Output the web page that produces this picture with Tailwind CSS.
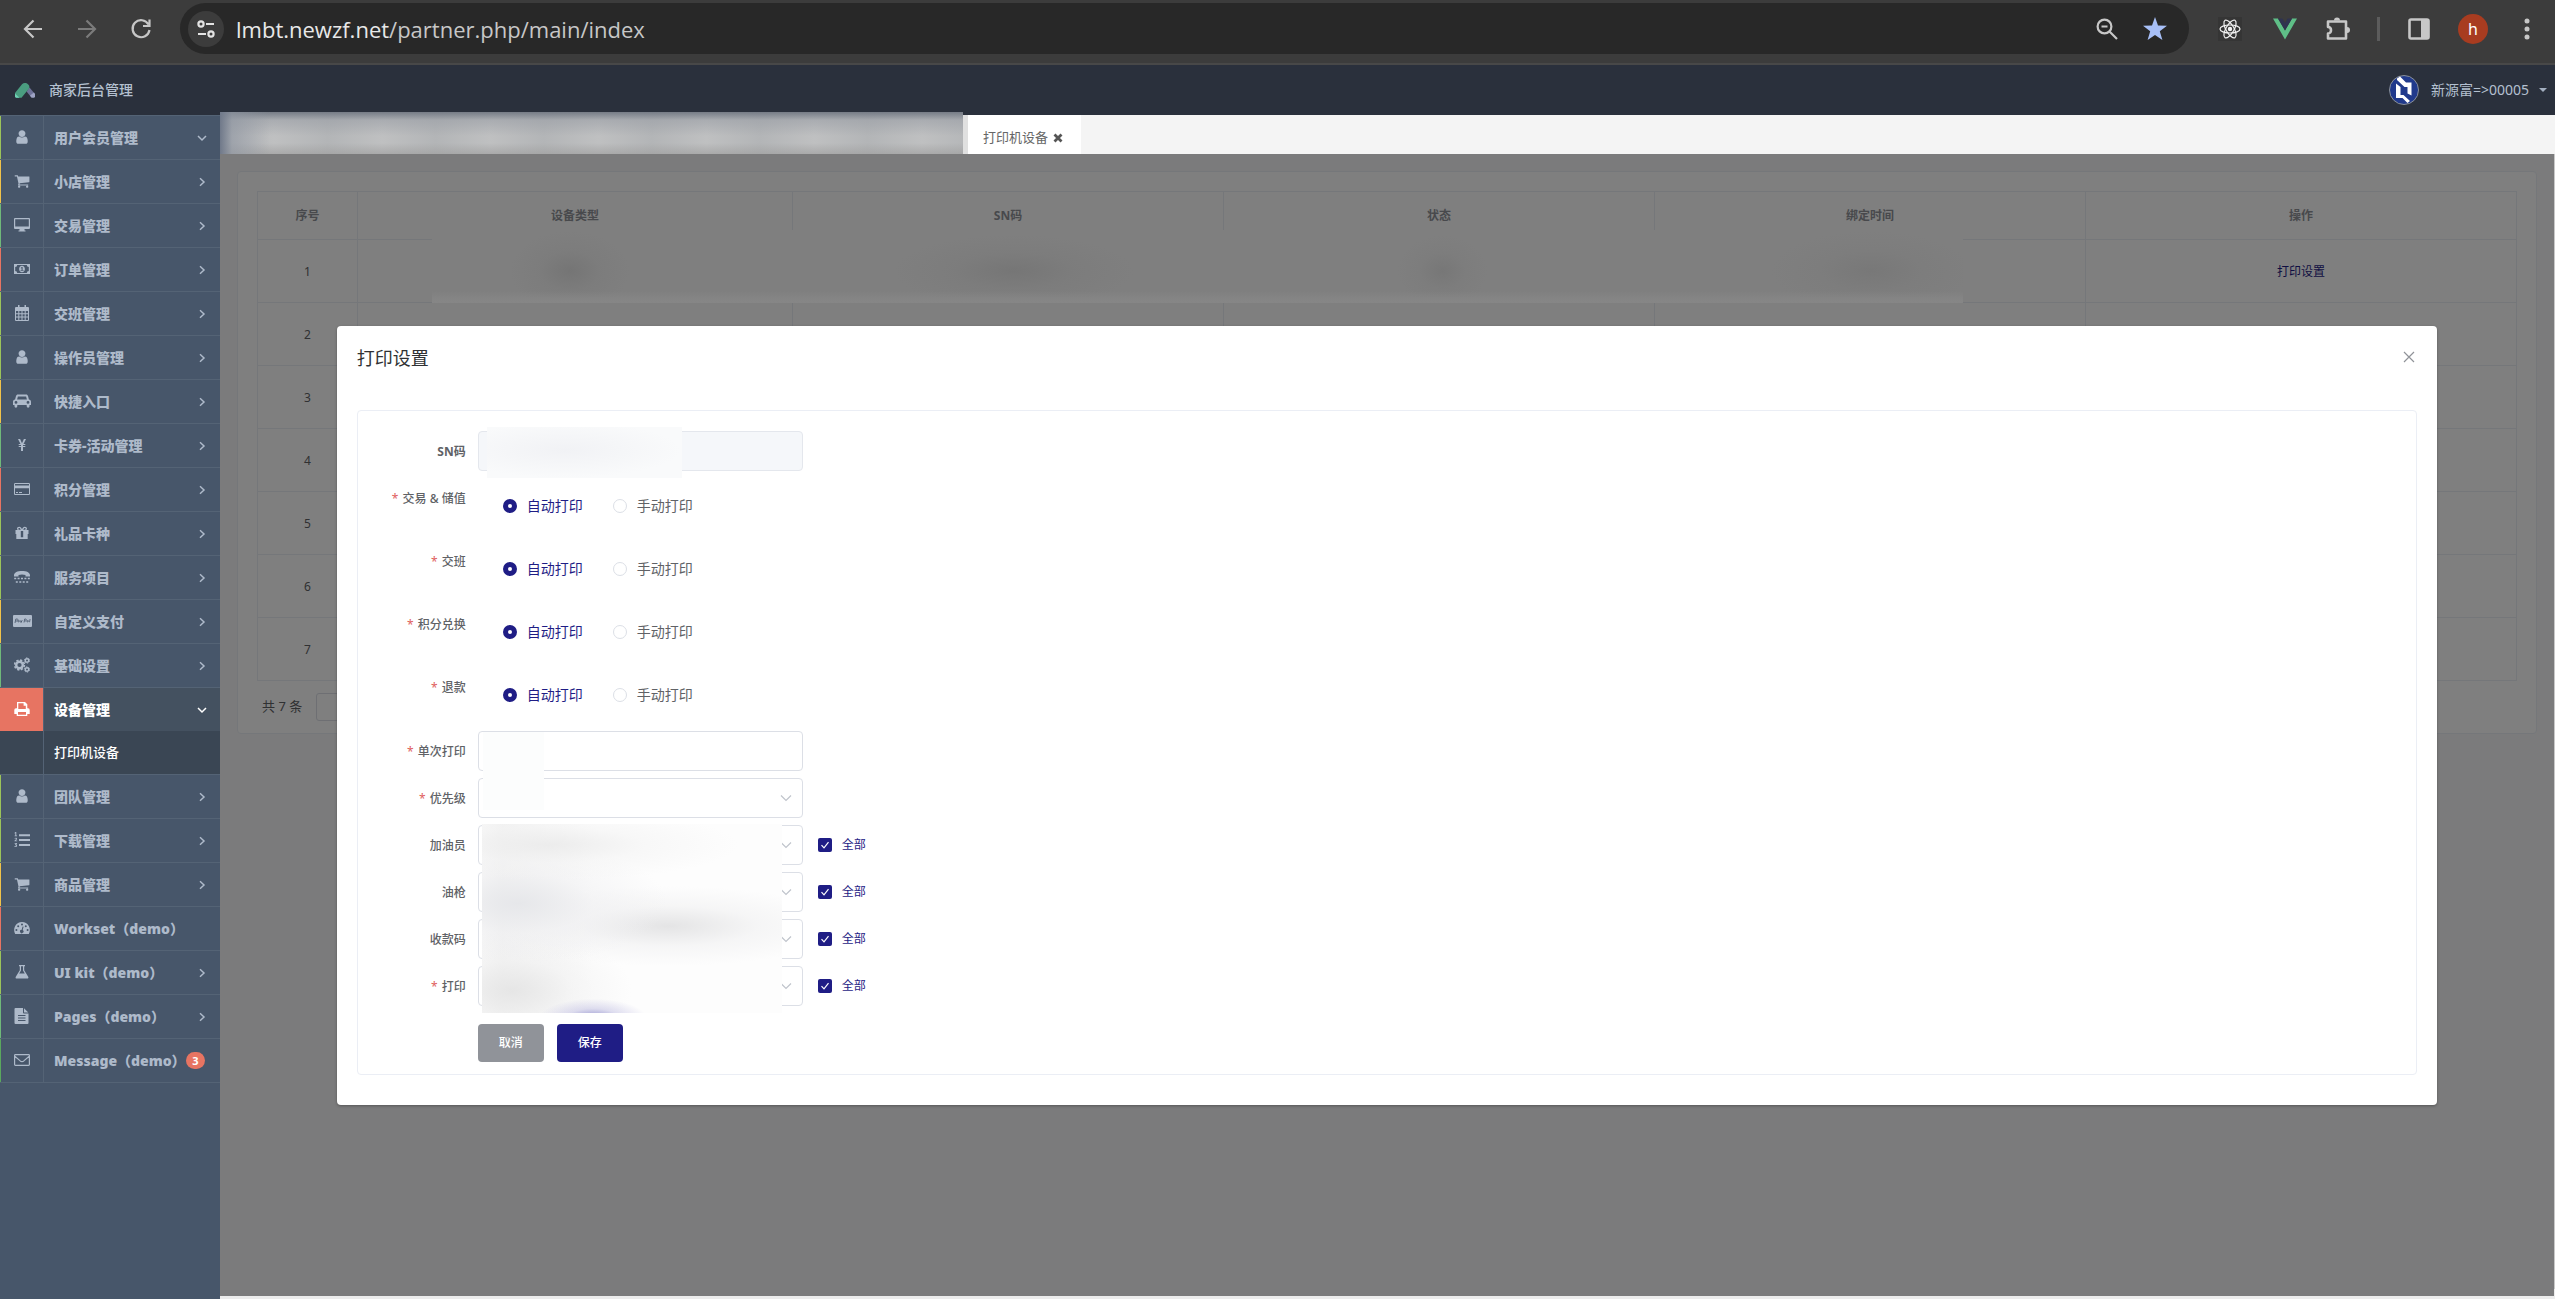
<!DOCTYPE html>
<html lang="zh-CN">
<head>
<meta charset="utf-8">
<title>商家后台管理</title>
<script src="https://cdn.jsdelivr.net/npm/@tailwindcss/browser@4"></script>
</head>
<body class="flex min-h-screen flex-col bg-[#ececec] text-sm text-[#606266] font-['Noto_Sans','Noto_Sans_CJK_SC',sans-serif]">

<!-- icon set -->
<svg class="hidden" aria-hidden="true">
  <symbol id="i-user" viewBox="0 0 1792 1792"><path d="M1536 1399q0 109-62.5 187t-150.5 78h-854q-88 0-150.5-78t-62.5-187q0-85 8.5-160.5t31.5-152 58.5-131 94-89 134.5-34.5q131 128 313 128t313-128q76 0 134.5 34.5t94 89 58.5 131 31.5 152 8.5 160.5zm-256-887q0 159-112.5 271.5t-271.5 112.5-271.5-112.5-112.5-271.5 112.5-271.5 271.5-112.5 271.5 112.5 112.5 271.5z"/></symbol>
  <symbol id="i-cart" viewBox="0 0 1792 1792"><path d="M704 1536q0 52-38 90t-90 38-90-38-38-90 38-90 90-38 90 38 38 90zm896 0q0 52-38 90t-90 38-90-38-38-90 38-90 90-38 90 38 38 90zm128-1088v512q0 24-16.500 42.500t-40.500 21.500l-1044 122q13 60 13 70 0 16-24 64h920q26 0 45 19t19 45-19 45-45 19h-1024q-26 0-45-19t-19-45q0-11 8-31.500t16-36 21.500-40 15.500-29.500l-177-823h-204q-26 0-45-19t-19-45 19-45 45-19h256q16 0 28.500 6.500t19.500 15.500 13 24.500 8 26 5.500 29.500 4.500 26h1201q26 0 45 19t19 45z"/></symbol>
  <symbol id="i-desktop" viewBox="0 0 16 16"><path fill-rule="evenodd" d="M1 1h14a1 1 0 0 1 1 1v9a1 1 0 0 1-1 1h-4.500v1.500h1v1h-7v-1h1V12H1a1 1 0 0 1-1-1V2a1 1 0 0 1 1-1zm.2 1.200v7.300h13.600V2.200z"/></symbol>
  <symbol id="i-money" viewBox="0 0 16 16"><path fill-rule="evenodd" d="M0 3h16v10H0zm1.200 3v4a2 2 0 0 1 2 2h9.600a2 2 0 0 1 2-2V6a2 2 0 0 1-2-2H3.200a2 2 0 0 1-2 2zM8 4.700c1.700 0 2.900 1.500 2.900 3.300s-1.200 3.300-2.900 3.300S5.100 9.800 5.100 8 6.300 4.700 8 4.700zm-1.400 5h2.900v-.8h-.9V6h-.8l-1.200.9.500.6.500-.4v1.800h-1z"/></symbol>
  <symbol id="i-calendar" viewBox="0 0 16 16"><path fill-rule="evenodd" d="M4 0h1.500v2h5V0H12v2h2a1 1 0 0 1 1 1v12a1 1 0 0 1-1 1H2a1 1 0 0 1-1-1V3a1 1 0 0 1 1-1h2zM2 6v2.200h2.300V6zm3.300 0v2.200h2.200V6zm3.200 0v2.200h2.200V6zm3.200 0v2.200H14V6zM2 9.200v2.200h2.300V9.200zm3.300 0v2.200h2.200V9.200zm3.200 0v2.200h2.200V9.200zm3.200 0v2.200H14V9.200zM2 12.400V15h2.300v-2.600zm3.300 0V15h2.200v-2.600zm3.200 0V15h2.200v-2.600zm3.200 0V15H14v-2.600z"/></symbol>
  <symbol id="i-car" viewBox="0 0 18 16"><path fill-rule="evenodd" d="M5 1.500h8c1.200 0 1.700.6 2 1.600l.9 3.400C17.300 6.700 18 7.600 18 8.800V12h-1.500v1.300a1.400 1.400 0 0 1-2.800 0V12H4.300v1.300a1.400 1.400 0 0 1-2.800 0V12H0V8.800c0-1.200.7-2.100 2.100-2.300L3 3.100C3.300 2.100 3.800 1.500 5 1.500zM4.100 6.400h9.800l-.8-3H4.900zM3 8a1.400 1.400 0 1 0 0 2.800A1.400 1.400 0 0 0 3 8zm12 0a1.400 1.400 0 1 0 0 2.800A1.400 1.400 0 0 0 15 8z"/></symbol>
  <symbol id="i-yen" viewBox="0 0 16 16"><path d="M4 2h2.100L8 6.200 9.900 2H12L9.500 7h1.800v1H9v1h2.300v1H9v4H7v-4H4.700V9H7V8H4.700V7h1.800z"/></symbol>
  <symbol id="i-card" viewBox="0 0 16 16"><path fill-rule="evenodd" d="M1.300 2h13.400c.7 0 1.300.6 1.300 1.300v9.400c0 .7-.6 1.300-1.300 1.300H1.300C.6 14 0 13.400 0 12.700V3.300C0 2.600.6 2 1.300 2zM1 3v1.600h14V3zm0 4.300V13h14V7.300zM2 11h2v1H2zm3 0h3v1H5z"/></symbol>
  <symbol id="i-gift" viewBox="0 0 16 16"><path fill-rule="evenodd" d="M8 4.200C7.400 2.600 6.600 1.700 5.200 1.700 3.900 1.700 3 2.500 3 3.600c0 .7.300 1.200.8 1.500H1.500V9H2.300v5h11.400V9h.8V5.100h-2.300c.5-.3.800-.8.800-1.500 0-1.100-.9-1.900-2.200-1.900-1.400 0-2.200.9-2.800 2.500zM5.200 3c.6 0 1.100.5 1.600 1.700H5.200c-1.200 0-1.200-1.700 0-1.700zm5.600 0c1.200 0 1.200 1.700 0 1.700H9.200C9.700 3.500 10.200 3 10.800 3zM6.800 6v6.300h2.400V6z"/></symbol>
  <symbol id="i-tty" viewBox="0 0 16 16"><path d="M0 6.200C0 3.500 3.500 2 8 2s8 1.500 8 4.200V7.500h-4.500V6c-2-.7-5-.7-7 0v1.500H0zM.2 8.700h2v1.500h-2zm3.400 0h2v1.500h-2zm3.400 0h2v1.500H7zm3.400 0h2v1.500h-2zm3.400 0h2v1.500h-2zM1.800 12.200h2v1.500h-2zm3.500 0h2v1.500h-2zm3.400 0h2v1.500h-2zm3.500 0h2v1.500h-2z"/></symbol>
  <symbol id="i-paycard" viewBox="0 0 19 16"><rect y="2" width="19" height="12" rx="1"/><path fill="none" stroke="#47566a" stroke-width=".8" d="M2 10l.8-4h1.500c1 0 .8 2-.3 2H2.500M6 7.500c-1.400 0-1.400 1.800 0 1.500l.4-1.500M7.500 7.500l.5 1.500 1-1.500L7.800 10M11 9.500l.7-3.500h1c1 0 .8 2-.2 2h-1M15 7.500c-1.400 0-1.400 1.800 0 1.500l.4-1.500M16.500 9.200l.6-3.200"/></symbol>
  <symbol id="i-cogs" viewBox="0 0 16 16"><g fill="none" stroke="currentColor"><circle cx="5.500" cy="8" r="3.300" stroke-width="2.400"/><circle cx="5.500" cy="8" r="4.900" stroke-width="1.600" stroke-dasharray="2.200 1.648"/><circle cx="13" cy="3.500" r="1.700" stroke-width="1.400"/><circle cx="13" cy="3.500" r="2.600" stroke-width="1" stroke-dasharray="1.500 1.222"/><circle cx="13" cy="12.500" r="1.700" stroke-width="1.400"/><circle cx="13" cy="12.500" r="2.600" stroke-width="1" stroke-dasharray="1.500 1.222"/></g></symbol>
  <symbol id="i-print" viewBox="0 0 16 16"><path fill-rule="evenodd" d="M3 1h8l2.300 2.300V7.200H14A1.800 1.800 0 0 1 15.700 9v4h-2.400v2H2.700v-2H.3V9A1.800 1.800 0 0 1 2 7.200h1zm1.300 1.300V8h7.500V4.700H9.600V2.300zM4 11v2.700h8V11z"/></symbol>
  <symbol id="i-list" viewBox="0 0 16 16"><path d="M5 2.200h11v2H5zm0 4.900h11v2H5zm0 4.900h11v2H5zM1.400 0h.9v3.600h.8v.7H.6v-.7h.7V1.200l-.6.400-.3-.6zM.5 6.200C1 5.500 3.100 5.400 3.100 6.800c0 .8-.8 1.200-1.300 1.700h1.400v.8H.4c0-1.600 1.700-1.700 1.700-2.400 0-.5-.7-.4-1.100 0zM.6 10.900h2.500v.7l-.8.9c1.300.3 1.200 2.600-.7 2.600-.6 0-1-.2-1.300-.4l.4-.7c.6.500 1.500.3 1.500-.2s-.5-.6-1.100-.5l-.2-.4.9-1.200H.6z"/></symbol>
  <symbol id="i-dash" viewBox="0 0 16 16"><path fill-rule="evenodd" d="M8 2a8 8 0 0 1 6.800 12H1.200A8 8 0 0 1 8 2zM2.400 9a1 1 0 1 0 0 2 1 1 0 0 0 0-2zm1.800-3.800a1 1 0 1 0 0 2 1 1 0 0 0 0-2zM8 3.400a1 1 0 1 0 0 2 1 1 0 0 0 0-2zm3.800 1.800a1 1 0 1 0 0 2 1 1 0 0 0 0-2zM13.600 9a1 1 0 1 0 0 2 1 1 0 0 0 0-2zM8.600 6.500l-.9 3.300a1.700 1.700 0 1 0 1 .3l.9-3.300z"/></symbol>
  <symbol id="i-flask" viewBox="0 0 16 16"><path fill-rule="evenodd" d="M5 1h6v1.200h-.8v4l4 6.500c.5.900.2 1.800-.9 1.800H2.700c-1.100 0-1.400-.9-.9-1.800l4-6.500v-4H5zm2 1.200v4.300L5.200 9.500h5.600L9 6.500V2.200z"/></symbol>
  <symbol id="i-file" viewBox="0 0 16 16"><path fill-rule="evenodd" d="M1.500 0H9v4.500a1 1 0 0 0 1 1h4.500V15a1 1 0 0 1-1 1h-12a1 1 0 0 1-1-1V1a1 1 0 0 1 1-1zM10 .2L14.300 4.500H10zM4 7v1h7.500V7zm0 2.500v1h7.500v-1zM4 12v1h7.500v-1z"/></symbol>
  <symbol id="i-mail" viewBox="0 0 16 16"><path fill="none" stroke="currentColor" stroke-width="1.200" d="M1.400 2.600h13.200c.4 0 .8.400.8.800v9.200c0 .4-.4.800-.8.800H1.400c-.4 0-.8-.4-.8-.8V3.400c0-.4.400-.8.800-.8zM.8 4.300l5.400 4.600c1.300 1 2.300 1 3.600 0l5.400-4.600"/></symbol>
  <symbol id="i-right" viewBox="0 0 10 10"><path fill="none" stroke="currentColor" stroke-width="1.500" d="M3 1.200 7 5 3 8.800"/></symbol>
  <symbol id="i-down" viewBox="0 0 10 10"><path fill="none" stroke="currentColor" stroke-width="1.500" d="M1 3 5 7l4-4"/></symbol>
  <symbol id="i-drop" viewBox="0 0 12 12"><path fill="none" stroke="#c0c4cc" stroke-width="1.200" d="M1 3.500 6 8.500l5-5"/></symbol>
  <symbol id="i-tick" viewBox="0 0 14 14"><path fill="none" stroke="#fff" stroke-width="1.200" d="M3.500 7.200 6 9.800l4.500-5.600"/></symbol>
</svg>

<!-- browser toolbar -->
<header class="flex h-[65px] items-center gap-[27px] border-b-2 border-[#484848] bg-[#3c3c3c] pr-4 pb-1.5 pl-[21px] text-[#c7c7c7]">
  <div class="flex items-center gap-[30px]">
    <button aria-label="后退"><svg class="size-6" viewBox="0 0 24 24" fill="none" stroke="currentColor" stroke-width="2.200"><path d="M21 12H4.500M12.500 3.500 4 12l8.500 8.500"/></svg></button>
    <button aria-label="前进" class="text-[#7b7b7b]"><svg class="size-6" viewBox="0 0 24 24" fill="none" stroke="currentColor" stroke-width="2.200"><path d="M3 12h16.500M11.500 3.500 20 12l-8.500 8.500"/></svg></button>
    <button aria-label="重新加载"><svg class="size-6" viewBox="0 0 24 24" fill="none" stroke="currentColor" stroke-width="2.200"><path d="M19.500 7.500A8.500 8.500 0 1 0 20.500 13M20.500 2.500V9H14"/></svg></button>
  </div>
  <div class="flex h-[51px] min-w-0 flex-1 items-center rounded-full bg-[#282828] pr-[22px] pl-2">
    <button aria-label="网站信息" class="grid size-9 shrink-0 place-items-center rounded-full bg-[#3c3c3c]"><svg class="size-5" viewBox="0 0 20 20" fill="none" stroke="#e3e3e3" stroke-width="2.200"><circle cx="5" cy="5" r="2.600"/><path d="M10 5h8M2 15h8"/><circle cx="15" cy="15" r="2.600"/></svg></button>
    <p class="min-w-0 flex-1 truncate pl-3 text-[22px] leading-8 text-[#c7c7c7] font-['Open_Sans',sans-serif]"><span class="text-[#e8e8e8]">lmbt.newzf.net</span>/partner.php/main/index</p>
    <button aria-label="缩放" class="mr-6"><svg class="size-6" viewBox="0 0 24 24" fill="none" stroke="currentColor" stroke-width="2.200"><circle cx="9.500" cy="9.500" r="6.900"/><path d="M14.500 14.500 22 22M6.500 9.500h6"/></svg></button>
    <button aria-label="收藏"><svg class="size-6" viewBox="0 0 24 24" fill="#a8c0f8"><path d="M12 0l3 8.500 9 .2-7.200 5.500L19.400 23 12 17.900 4.600 23l2.600-8.800L0 8.700l9-.2z"/></svg></button>
  </div>
  <button aria-label="React" class="grid w-7 place-items-center"><svg class="size-6 bg-[#353535]" viewBox="0 0 24 24" fill="none" stroke="#f2f2f2" stroke-width="1.200"><ellipse cx="12" cy="12" rx="10" ry="4"/><ellipse cx="12" cy="12" rx="10" ry="4" transform="rotate(60 12 12)"/><ellipse cx="12" cy="12" rx="10" ry="4" transform="rotate(120 12 12)"/><circle cx="12" cy="12" r="1.600" fill="#f2f2f2"/></svg></button>
  <button aria-label="Vue" class="grid w-7 place-items-center"><svg class="size-6" viewBox="0 0 24 24"><path fill="#5fbf87" d="M0 1.500h5L12 13.500l7-12h5L12 22.500z"/><path fill="#2f3350" d="M5 1.500h4.500L12 6l2.500-4.500H19l-7 12z"/></svg></button>
  <button aria-label="扩展程序"><svg class="size-6" viewBox="0 0 24 24" fill="none" stroke="currentColor" stroke-width="2.600" stroke-linejoin="round"><path d="M2 4.500h18v17H2v-5c4 0 4-6.500 0-6.500z"/><path fill="currentColor" stroke="none" d="M8 3.500a3 3 0 0 1 6 0zM21 10a3 3 0 0 1 0 6z"/></svg></button>
  <span class="h-6 w-[3px] bg-[#5c5c5c]"></span>
  <button aria-label="侧边栏"><svg class="size-6" viewBox="0 0 24 24"><rect x="2.500" y="2.500" width="19" height="19" rx="1.500" fill="none" stroke="currentColor" stroke-width="2.600"/><path fill="currentColor" d="M14 2h8v20h-8z"/></svg></button>
  <button class="size-[30px] rounded-full bg-[#a83c20] text-base leading-[30px] text-white">h</button>
  <button aria-label="菜单"><svg class="size-6" viewBox="0 0 24 24" fill="currentColor"><circle cx="12" cy="4" r="2.500"/><circle cx="12" cy="12" r="2.500"/><circle cx="12" cy="20" r="2.500"/></svg></button>
</header>

<!-- application header -->
<div class="flex h-[50px] items-center bg-[#2a303c] pr-2 pl-[15px] text-[#b4c0d0]">
  <svg class="h-[15px] w-5" viewBox="0 0 20 15"><path fill="#6f7399" d="M14.500 4.500 19.500 10.500 16 14 11.500 8.500z"/><path fill="#9ea3c4" d="M15 12.500l4-3 1 1.500v3l-1 .7h-2.500z"/><path fill="#4a9d80" d="M0 10 7 1.200C8.500-.4 11.500-.4 13 1.300c1.600 1.500 1.800 3 .8 4.400L6.500 14.700H1.500L0 13.500z"/><path fill="#6fd0b4" d="M0 10.500 4.500 14.700H1L0 14z"/></svg>
  <h1 class="ml-3.5 flex-1 font-medium">商家后台管理</h1>
  <button class="flex items-center text-sm">
    <svg class="mr-3 size-[30px]" viewBox="0 0 30 30"><circle cx="15" cy="15" r="14.500" fill="#213a8c" stroke="#8a9098"/><path fill="#fff" fill-rule="evenodd" d="M8 3.500 11 1.500l6 6h5.500v13l-4-2V12h-3L8 5zM7 8.500l4.500 3.500v8h3L21 26l-2.500 2-5-5H7z"/></svg>
    新源富=&gt;00005
    <svg class="ml-2.5 h-1 w-2" viewBox="0 0 8 4"><path fill="#a3afc0" d="M0 0h8L4 4z"/></svg>
  </button>
</div>

<div class="flex flex-1">
  <!-- main menu -->
  <nav class="w-[220px] shrink-0 bg-[#47566a] font-bold text-[#aebaca]">
    <ul class="border-b border-[#546375] [&_a]:flex [&_a]:h-full [&_a]:items-center [&_a]:border-l [&_a]:border-inherit [&_b]:flex-1 [&_b]:pl-2.5 [&_i]:flex [&_i]:h-full [&_i]:w-[43px] [&_i]:items-center [&_i]:justify-center [&_i]:border-r [&_i]:border-[#546375] [&_i]:pb-0.5 [&_i_svg]:size-4 [&_a>svg]:mr-[13px] [&_a>svg]:size-2.5 [&>li]:h-11 [&>li]:border-t [&>li]:border-[#546375] [&_svg]:fill-current">
      <li><a href="#" class="border-l-[#9bc35a]!"><i><svg><use href="#i-user"/></svg></i><b>用户会员管理</b><svg><use href="#i-down"/></svg></a></li>
      <li><a href="#" class="border-l-[#f0c24a]!"><i><svg><use href="#i-cart"/></svg></i><b>小店管理</b><svg><use href="#i-right"/></svg></a></li>
      <li><a href="#" class="border-l-[#6fb97a]!"><i><svg><use href="#i-desktop"/></svg></i><b>交易管理</b><svg><use href="#i-right"/></svg></a></li>
      <li><a href="#" class="border-l-[#e77462]!"><i><svg><use href="#i-money"/></svg></i><b>订单管理</b><svg><use href="#i-right"/></svg></a></li>
      <li><a href="#" class="border-l-[#9bc35a]!"><i><svg><use href="#i-calendar"/></svg></i><b>交班管理</b><svg><use href="#i-right"/></svg></a></li>
      <li><a href="#" class="border-l-[#9bc35a]!"><i><svg><use href="#i-user"/></svg></i><b>操作员管理</b><svg><use href="#i-right"/></svg></a></li>
      <li><a href="#" class="border-l-[#f0c24a]!"><i><svg class="w-[18px]!"><use href="#i-car"/></svg></i><b>快捷入口</b><svg><use href="#i-right"/></svg></a></li>
      <li><a href="#" class="border-l-[#6fb97a]!"><i><svg><use href="#i-yen"/></svg></i><b>卡券-活动管理</b><svg><use href="#i-right"/></svg></a></li>
      <li><a href="#" class="border-l-[#e77462]!"><i><svg><use href="#i-card"/></svg></i><b>积分管理</b><svg><use href="#i-right"/></svg></a></li>
      <li><a href="#" class="border-l-[#9bc35a]!"><i><svg><use href="#i-gift"/></svg></i><b>礼品卡种</b><svg><use href="#i-right"/></svg></a></li>
      <li><a href="#" class="border-l-[#9bc35a]!"><i><svg><use href="#i-tty"/></svg></i><b>服务项目</b><svg><use href="#i-right"/></svg></a></li>
      <li><a href="#" class="border-l-[#f0c24a]!"><i><svg class="w-[19px]!"><use href="#i-paycard"/></svg></i><b>自定义支付</b><svg><use href="#i-right"/></svg></a></li>
      <li><a href="#" class="border-l-[#6fb97a]!"><i><svg><use href="#i-cogs"/></svg></i><b>基础设置</b><svg><use href="#i-right"/></svg></a></li>
      <li><a href="#" class="border-l-[#e77462]! bg-[#445160] text-white"><i class="bg-[#e77462]"><svg><use href="#i-print"/></svg></i><b>设备管理</b><svg><use href="#i-down"/></svg></a></li>
      <li class="h-[43px]! border-t-0! bg-[#3a4654]"><a href="#" class="border-l-[#3a4654]! text-[13px] text-white"><i></i><b class="font-medium">打印机设备</b></a></li>
      <li><a href="#" class="border-l-[#9bc35a]!"><i><svg><use href="#i-user"/></svg></i><b>团队管理</b><svg><use href="#i-right"/></svg></a></li>
      <li><a href="#" class="border-l-[#9bc35a]!"><i><svg><use href="#i-list"/></svg></i><b>下载管理</b><svg><use href="#i-right"/></svg></a></li>
      <li><a href="#" class="border-l-[#f0c24a]!"><i><svg><use href="#i-cart"/></svg></i><b>商品管理</b><svg><use href="#i-right"/></svg></a></li>
      <li><a href="#" class="border-l-[#e77462]!"><i><svg><use href="#i-dash"/></svg></i><b>Workset（demo）</b></a></li>
      <li><a href="#" class="border-l-[#9bc35a]!"><i><svg><use href="#i-flask"/></svg></i><b>UI kit（demo）</b><svg><use href="#i-right"/></svg></a></li>
      <li><a href="#" class="border-l-[#6fb97a]!"><i><svg><use href="#i-file"/></svg></i><b>Pages（demo）</b><svg><use href="#i-right"/></svg></a></li>
      <li><a href="#" class="border-l-[#5aa85e]!"><i><svg><use href="#i-mail"/></svg></i><b class="whitespace-nowrap">Message（demo）</b><span class="mr-[15px] h-[17px] w-[19px] shrink-0 rounded-full bg-[#e77462] text-center text-[11px] leading-[17px] text-white">3</span></a></li>
    </ul>
  </nav>

  <main class="relative flex min-w-0 flex-1 flex-col">
    <!-- page tabs; the earlier ones are obscured -->
    <div class="flex h-[39px] bg-[#f4f4f4] pl-[743px]">
      <a href="#" class="flex items-center gap-1 border-l-[5px] border-[#e0e0e0] bg-white pt-1.5 pr-[18px] pl-[15px] text-[13px] whitespace-nowrap text-[#666]">打印机设备<svg class="ml-px size-2.5" viewBox="0 0 10 10" stroke="#555" stroke-width="2.800"><path d="M1.500 1.500l7 7M8.500 1.500l-7 7"/></svg></a>
    </div>
    <div class="absolute -top-[3px] left-0 h-[47px] w-[743px] bg-[#b4b6b8] bg-[linear-gradient(to_right,#70798a_0,#8f96a299_12px,#b4b6b800_50px),linear-gradient(to_bottom,#767c86_0,#9b9fa699_8px,#b4b6b800_24px),linear-gradient(to_top,#a0a0a0_0,#b4b6b800_16px),repeating-linear-gradient(to_right,#b3b5b7_0,#bfc0c1_54px,#b3b5b7_108px)]"></div>

    <div class="relative mr-px mb-[3px] flex-1 bg-[#f7f7f8]">
      <!-- device list -->
      <section class="mx-[17px] mt-[17px] mb-6 rounded border border-[#ebeef5] bg-white px-[19px] pt-[19px] pb-3 text-xs">
        <table class="w-full table-fixed border-collapse text-center [&_td]:h-[63px] [&_td]:border [&_td]:border-[#ebeef5] [&_td]:pt-0.5 [&_th]:h-12 [&_th]:border [&_th]:border-[#ebeef5] [&_th]:pt-px [&_th]:text-[#909399]">
          <colgroup><col class="w-[100px]"><col class="w-[435px]"><col><col><col><col></colgroup>
          <thead><tr><th>序号</th><th>设备类型</th><th>SN码</th><th>状态</th><th>绑定时间</th><th>操作</th></tr></thead>
          <tbody>
            <tr><td>1</td><td></td><td></td><td></td><td></td><td><a href="#" class="text-[#1f1d85]">打印设置</a></td></tr>
            <tr><td>2</td><td></td><td></td><td></td><td></td><td></td></tr>
            <tr><td>3</td><td></td><td></td><td></td><td></td><td></td></tr>
            <tr><td>4</td><td></td><td></td><td></td><td></td><td></td></tr>
            <tr><td>5</td><td></td><td></td><td></td><td></td><td></td></tr>
            <tr><td>6</td><td></td><td></td><td></td><td></td><td></td></tr>
            <tr><td>7</td><td></td><td></td><td></td><td></td><td></td></tr>
          </tbody>
        </table>
        <div class="mt-3 flex items-center gap-3.5 pl-[5px] text-[13px]">
          <span>共 7 条</span>
          <select aria-label="每页条数" class="h-7 w-24 appearance-none rounded-[3px] border border-[#dcdfe6]"></select>
        </div>
      </section>

      <!-- modal layer -->
      <div class="absolute inset-0 flex items-start justify-center bg-black/50">
        <!-- obscured cells of the first row -->
        <div class="absolute top-[76px] right-[591px] left-[212px] h-[73px] bg-[#7f7f7f] bg-[linear-gradient(to_top,#868686_0,#858585_4px,#7f7f7f00_12px),radial-gradient(ellipse_60px_40px_at_9%_56%,#757575,#7a7a7a88_50%,#7f7f7f00),radial-gradient(ellipse_120px_36px_at_38%_56%,#767676,#7a7a7a88_50%,#7f7f7f00),radial-gradient(ellipse_45px_36px_at_66%_56%,#777777,#7b7b7b88_50%,#7f7f7f00),radial-gradient(ellipse_100px_40px_at_94%_56%,#787878,#7b7b7b88_50%,#7f7f7f00)]"></div>

        <div role="dialog" aria-label="打印设置" class="mt-[172px] w-[90%] rounded-sm bg-white px-5 pb-[30px] shadow-[0_1px_3px_rgba(0,0,0,0.3)]">
          <div class="flex h-[84px] items-start justify-between pt-5">
            <h2 class="text-lg leading-6 text-[#303133]">打印设置</h2>
            <button aria-label="关闭" class="mt-1 mr-px"><svg class="size-3.5" viewBox="0 0 14 14" stroke="#909399" stroke-width="1.200"><path d="M2 2l10 10M12 2 2 12"/></svg></button>
          </div>
          <form class="relative flex flex-col gap-[7px] rounded border border-[#ebeef5] px-5 pt-5 pb-3 text-xs text-[#1f1d85] [&_em]:mr-px [&_em]:font-normal [&_em]:text-[#e0605e] [&_em]:not-italic [&_.l]:h-10 [&_.l]:w-[88px] [&_.l]:shrink-0 [&_.l]:text-right [&_.l]:leading-[42px] [&_.l]:font-medium [&_.l]:whitespace-nowrap [&_.l]:text-[#606266] [&>div]:flex [&>div]:gap-3 [&_input[type=radio]]:size-3.5 [&_input[type=radio]]:appearance-none [&_input[type=radio]]:rounded-full [&_input[type=radio]]:border [&_input[type=radio]]:border-[#dcdfe6] [&_input[type=radio]:checked]:border-5 [&_input[type=radio]:checked]:border-[#1f1d85]">
            <div><label class="l font-bold!" for="sn">SN码</label><input id="sn" disabled class="h-10 w-[325px] rounded border border-[#e4e7ed] bg-[#f5f7fa] px-4"></div>

            <div class="h-14"><span class="l"><em>*</em> 交易 &amp; 储值</span>
              <span class="flex items-center gap-[30px] pl-[25px] text-sm"><label class="flex items-center gap-2.5"><input type="radio" name="trade" checked>自动打印</label><label class="flex items-center gap-2.5 text-[#606266]"><input type="radio" name="trade">手动打印</label></span></div>
            <div class="h-14"><span class="l"><em>*</em> 交班</span>
              <span class="flex items-center gap-[30px] pl-[25px] text-sm"><label class="flex items-center gap-2.5"><input type="radio" name="shift" checked>自动打印</label><label class="flex items-center gap-2.5 text-[#606266]"><input type="radio" name="shift">手动打印</label></span></div>
            <div class="h-14"><span class="l"><em>*</em> 积分兑换</span>
              <span class="flex items-center gap-[30px] pl-[25px] text-sm"><label class="flex items-center gap-2.5"><input type="radio" name="points" checked>自动打印</label><label class="flex items-center gap-2.5 text-[#606266]"><input type="radio" name="points">手动打印</label></span></div>
            <div class="h-14"><span class="l"><em>*</em> 退款</span>
              <span class="flex items-center gap-[30px] pl-[25px] text-sm"><label class="flex items-center gap-2.5"><input type="radio" name="refund" checked>自动打印</label><label class="flex items-center gap-2.5 text-[#606266]"><input type="radio" name="refund">手动打印</label></span></div>

            <div class="mt-px"><label class="l" for="once"><em>*</em> 单次打印</label><input id="once" class="h-10 w-[325px] rounded border border-[#dcdfe6] px-4"></div>
            <div><label class="l" for="prio"><em>*</em> 优先级</label><span class="relative"><select id="prio" class="h-10 w-[325px] appearance-none rounded border border-[#dcdfe6] px-4"></select><svg class="pointer-events-none absolute top-3.5 right-[11px] size-3"><use href="#i-drop"/></svg></span></div>
            <div><label class="l" for="staff">加油员</label><span class="relative"><select id="staff" class="h-10 w-[325px] appearance-none rounded border border-[#dcdfe6] px-4"></select><svg class="pointer-events-none absolute top-3.5 right-[11px] size-3"><use href="#i-drop"/></svg></span>
              <label class="flex items-center gap-2.5 pl-[3px]"><span class="relative size-3.5"><input type="checkbox" checked class="block size-3.5 appearance-none rounded-xs bg-[#1f1d85]"><svg class="pointer-events-none absolute inset-0 size-3.5"><use href="#i-tick"/></svg></span>全部</label></div>
            <div><label class="l" for="gun">油枪</label><span class="relative"><select id="gun" class="h-10 w-[325px] appearance-none rounded border border-[#dcdfe6] px-4"></select><svg class="pointer-events-none absolute top-3.5 right-[11px] size-3"><use href="#i-drop"/></svg></span>
              <label class="flex items-center gap-2.5 pl-[3px]"><span class="relative size-3.5"><input type="checkbox" checked class="block size-3.5 appearance-none rounded-xs bg-[#1f1d85]"><svg class="pointer-events-none absolute inset-0 size-3.5"><use href="#i-tick"/></svg></span>全部</label></div>
            <div><label class="l" for="code">收款码</label><span class="relative"><select id="code" class="h-10 w-[325px] appearance-none rounded border border-[#dcdfe6] px-4"></select><svg class="pointer-events-none absolute top-3.5 right-[11px] size-3"><use href="#i-drop"/></svg></span>
              <label class="flex items-center gap-2.5 pl-[3px]"><span class="relative size-3.5"><input type="checkbox" checked class="block size-3.5 appearance-none rounded-xs bg-[#1f1d85]"><svg class="pointer-events-none absolute inset-0 size-3.5"><use href="#i-tick"/></svg></span>全部</label></div>
            <div><label class="l" for="prt"><em>*</em> 打印</label><span class="relative"><select id="prt" class="h-10 w-[325px] appearance-none rounded border border-[#dcdfe6] px-4"></select><svg class="pointer-events-none absolute top-3.5 right-[11px] size-3"><use href="#i-drop"/></svg></span>
              <label class="flex items-center gap-2.5 pl-[3px]"><span class="relative size-3.5"><input type="checkbox" checked class="block size-3.5 appearance-none rounded-xs bg-[#1f1d85]"><svg class="pointer-events-none absolute inset-0 size-3.5"><use href="#i-tick"/></svg></span>全部</label></div>

            <div class="mt-[11px] gap-[13px]! pl-[100px]">
              <button type="button" class="h-[38px] w-[66px] rounded bg-[#909399] font-medium text-white">取消</button>
              <button type="button" class="h-[38px] w-[66px] rounded bg-[#1f1d85] font-medium text-white">保存</button>
            </div>

            <!-- obscured field values -->
            <span class="absolute top-4 left-[129px] h-[51px] w-[195px] bg-[#f9fafb] bg-[radial-gradient(ellipse_at_40%_45%,#f1f2f5,#f9fafb00_70%)]"></span>
            <span class="absolute top-[321px] left-[125px] h-[78px] w-[61px] bg-[#fcfdfd]"></span>
            <span class="absolute top-[413px] left-[124px] h-[189px] w-[300px] bg-[#fdfdfd] bg-[radial-gradient(ellipse_54px_20px_at_37%_103%,#8f8dcc,#c4c2e488_50%,#fdfdfd00),radial-gradient(ellipse_190px_36px_at_22%_11%,#ececec,#f3f3f388_50%,#fdfdfd00),radial-gradient(ellipse_150px_60px_at_12%_42%,#e6e7ea,#efeff188_50%,#fdfdfd00),radial-gradient(ellipse_180px_40px_at_62%_54%,#e4e4e5,#efeff088_50%,#fdfdfd00),radial-gradient(ellipse_120px_60px_at_10%_88%,#e6e6e6,#f0f0f088_50%,#fdfdfd00),linear-gradient(to_right,#f8f8f8_0,#f1f1f1_20px,#fdfdfd00_110px)]"></span>
          </form>
        </div>
      </div>
    </div>
    <span class="absolute top-[39px] right-0 h-[1135px] w-px bg-[#c8c8c8]"></span>
  </main>
</div>
</body>
</html>
